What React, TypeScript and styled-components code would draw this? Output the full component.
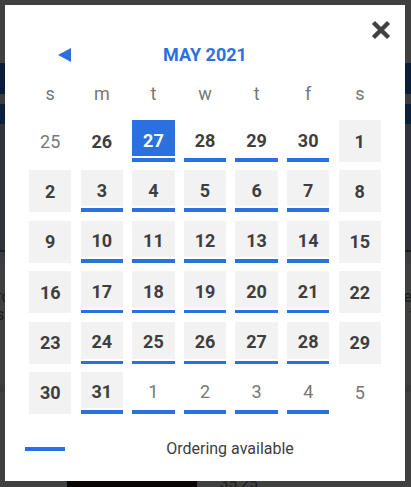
import styled, { createGlobalStyle } from "styled-components";

const GlobalStyle = createGlobalStyle`
  html, body {
    margin: 0;
    padding: 0;
    background: #404040;
    overflow: hidden;
  }

  * {
    box-sizing: border-box;
  }

  body {
    font-family: Roboto, "Liberation Sans", Arial, sans-serif;
  }
`;

const BLUE = "#2a70e0";
const SHADE = "#f2f2f2";
const INK = "#3e3e3e";
const MUTED = "#777777";

// dimmed page behind the modal
const Page = styled.div`
  width: 411px;
  height: 487px;
  display: flex;
  flex-direction: column;
  background: #404040;
`;

const Band = styled.div<{ $h: number; $bg: string }>`
  flex: none;
  height: ${(p) => p.$h}px;
  background: ${(p) => p.$bg};
`;

const Hero = styled.div`
  flex: none;
  height: 128px;
  background: #30343a;
  border-bottom: 2px solid #1e1e1e;
`;

const TextRows = styled.div`
  flex: none;
  padding: 24px 0 0;
  height: 121px;
  display: flex;
  flex-direction: column;
  gap: 1px;
`;

const TextRow = styled.div`
  display: flex;
  justify-content: space-between;
  font-size: 16px;
  line-height: 17px;
  color: #1c1c1c;
  margin: 0 -4px;
`;

const Footer = styled.div`
  flex: 1;
  display: flex;
  align-items: flex-end;
  padding-left: 67px;
  gap: 8px;
`;

const Thumb = styled.div`
  width: 130px;
  height: 9px;
  background: #0a0505;
`;

const Price = styled.span`
  font-size: 15px;
  line-height: 10px;
  height: 9px;
  overflow: hidden;
  color: #1c1c1c;
  margin-left: 15px;
`;

const Modal = styled.div`
  position: fixed;
  left: 5px;
  top: 5px;
  width: 400px;
  height: 476px;
  background: #fff;
  padding: 0 24px;
  display: flex;
  flex-direction: column;
`;

const CloseRow = styled.div`
  display: flex;
  justify-content: flex-end;
  padding-top: 15px;
  margin-right: -10px;
`;

const CloseButton = styled.button`
  width: 20px;
  height: 20px;
  padding: 0;
  border: 0;
  background: none;
  cursor: pointer;
  display: flex;
`;

const Week = styled.div`
  display: grid;
  grid-template-columns: repeat(7, 1fr);
  column-gap: 9.2px;
`;

const MonthHeader = styled(Week)`
  height: 28px;
  align-items: center;
`;

const PrevButton = styled.button`
  grid-column: 1;
  justify-self: end;
  width: 13px;
  height: 14px;
  padding: 0;
  border: 0;
  background: none;
  display: flex;
  cursor: pointer;
  margin-top: 2px;
`;

const MonthTitle = styled.div`
  grid-column: 2 / span 5;
  text-align: center;
  font-size: 18px;
  font-weight: 700;
  color: ${BLUE};
`;

const WeekdayRow = styled(Week)`
  margin-top: 13px;
  height: 24px;
  align-items: center;
`;

const Weekday = styled.span`
  text-align: center;
  font-size: 18px;
  color: ${MUTED};
`;

const DayGrid = styled(Week)`
  margin-top: 15px;
  grid-auto-rows: 42px;
  row-gap: 8.4px;
`;

type DayProps = {
  $shade?: boolean;
  $avail?: boolean;
  $muted?: boolean;
  $selected?: boolean;
};

const dayBackground = (p: DayProps) => {
  const top = p.$selected ? BLUE : p.$shade ? SHADE : "transparent";
  if (!p.$avail) return top;
  return `linear-gradient(to bottom, ${top} 0 36.5px, transparent 36.5px 38.5px, ${BLUE} 38.5px 42px)`;
};

const Day = styled.div<DayProps>`
  display: flex;
  align-items: center;
  justify-content: center;
  font-size: 18px;
  font-weight: ${(p) => (p.$muted ? 400 : 700)};
  color: ${(p) => (p.$selected ? "#fff" : p.$muted ? MUTED : INK)};
  background: ${(p) => dayBackground(p)};
  padding-bottom: ${(p) => (p.$avail ? "2px" : "0")};
`;

const Legend = styled.div`
  margin: 25px -14px 0 -4px;
  height: 20px;
  display: flex;
  align-items: center;
`;

const LegendBar = styled.span`
  width: 40px;
  height: 4.4px;
  background: ${BLUE};
`;

const LegendText = styled.span`
  flex: 1;
  text-align: center;
  font-size: 16px;
  color: ${INK};
`;

type DayCell = {
  n: number;
  shade?: boolean;
  avail?: boolean;
  muted?: boolean;
  selected?: boolean;
};

const buildDays = (): DayCell[] => {
  const days: DayCell[] = [
    { n: 25, muted: true },
    { n: 26 },
    { n: 27, selected: true, avail: true },
    { n: 28, avail: true },
    { n: 29, avail: true },
    { n: 30, avail: true },
    { n: 1, shade: true },
  ];
  for (let n = 2; n <= 29; n++) {
    const col = (n - 2) % 7;
    days.push({ n, shade: true, avail: col !== 0 && col !== 6 });
  }
  days.push({ n: 30, shade: true });
  days.push({ n: 31, shade: true, avail: true });
  [1, 2, 3, 4].forEach((n) => days.push({ n, muted: true, avail: true }));
  days.push({ n: 5, muted: true });
  return days;
};

const weekdays = ["s", "m", "t", "w", "t", "f", "s"];

export default function App() {
  const days = buildDays();

  return (
    <>
      <GlobalStyle />
      <Page>
        <Band $h={63} $bg="#404040" />
        <Band $h={31} $bg="#0b1d3a" />
        <Band $h={10} $bg="#3b3b3b" />
        <Band $h={20} $bg="#0b1f3f" />
        <Hero />
        <Band $h={12} $bg="#393b3e" />
        <TextRows>
          <TextRow>
            <span>ro</span>
            <span>e,</span>
          </TextRow>
          <TextRow>
            <span>s</span>
            <span>f</span>
          </TextRow>
        </TextRows>
        <Band $h={7} $bg="#3a3a3a" />
        <Footer>
          <Thumb />
          <Price>35.25</Price>
        </Footer>
      </Page>

      <Modal>
        <CloseRow>
          <CloseButton type="button" aria-label="Close">
            <svg width="20" height="20" viewBox="0 0 20 20">
              <path
                d="M4 4 L16 16 M16 4 L4 16"
                stroke="#404040"
                strokeWidth="4.4"
                strokeLinecap="square"
              />
            </svg>
          </CloseButton>
        </CloseRow>

        <MonthHeader>
          <PrevButton type="button" aria-label="Previous month">
            <svg width="13" height="14" viewBox="0 0 13 14">
              <polygon points="0,7 13,0 13,14" fill={BLUE} />
            </svg>
          </PrevButton>
          <MonthTitle>MAY 2021</MonthTitle>
        </MonthHeader>

        <WeekdayRow>
          {weekdays.map((d, i) => (
            <Weekday key={i}>{d}</Weekday>
          ))}
        </WeekdayRow>

        <DayGrid>
          {days.map((d, i) => (
            <Day
              key={i}
              $shade={d.shade}
              $avail={d.avail}
              $muted={d.muted}
              $selected={d.selected}
            >
              {d.n}
            </Day>
          ))}
        </DayGrid>

        <Legend>
          <LegendBar />
          <LegendText>Ordering available</LegendText>
        </Legend>
      </Modal>
    </>
  );
}
